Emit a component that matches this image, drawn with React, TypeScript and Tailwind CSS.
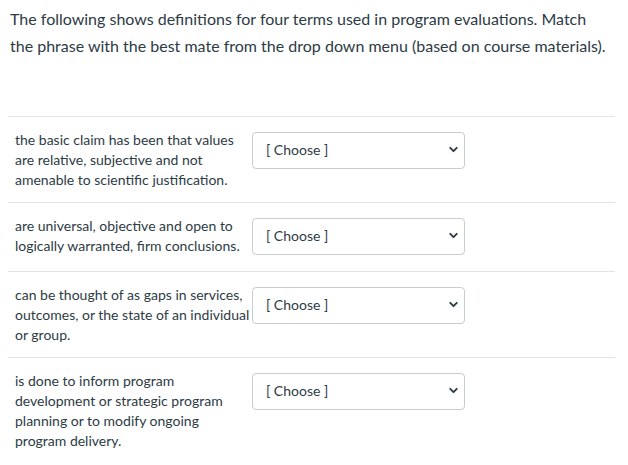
import { ChevronDown } from 'lucide-react';

const rows = [
  'the basic claim has been that values are relative, subjective and not amenable to scientific justification.',
  'are universal, objective and open to logically warranted, firm conclusions.',
  'can be thought of as gaps in services, outcomes, or the state of an individual or group.',
  'is done to inform program development or strategic program planning or to modify ongoing program delivery.',
];

const ChooseSelect = () => {
  return (
    <div className="mt-[2px] mb-[4px] flex h-[37px] w-[213px] shrink-0 items-center justify-between rounded-[4px] border border-[#c7cdd1] bg-white pb-[2px] pl-[13px] pr-[4px]">
      <span className="text-[14px] text-[#2d3b45]">[ Choose ]</span>
      <ChevronDown className="h-[13px] w-[13px] text-[#2d3b45]" strokeWidth={3.5} />
    </div>
  );
};

const App = () => {
  return (
    <div
      className="h-[465px] w-[628px] bg-white text-[#2d3b45]"
      style={{ fontFamily: 'Lato, "Liberation Sans", sans-serif' }}
    >
      <p className="w-[610px] pl-[10px] pt-[5px] text-[16px] leading-[27px]">
        The following shows definitions for four terms used in program evaluations. Match the
        phrase with the best mate from the drop down menu (based on course materials).
      </p>
      <div className="ml-[8px] mt-[57px] w-[607px] border-t border-[#e0e4e7]">
        {rows.map((text, i) => (
          <div
            key={i}
            className="flex items-start border-b border-[#e0e4e7] px-[7px] pt-[13px] pb-[12px] last:border-b-0"
          >
            <div className="w-[237px] shrink-0 text-[14px] leading-[20px]">{text}</div>
            <ChooseSelect />
          </div>
        ))}
      </div>
    </div>
  );
};

export default App;
